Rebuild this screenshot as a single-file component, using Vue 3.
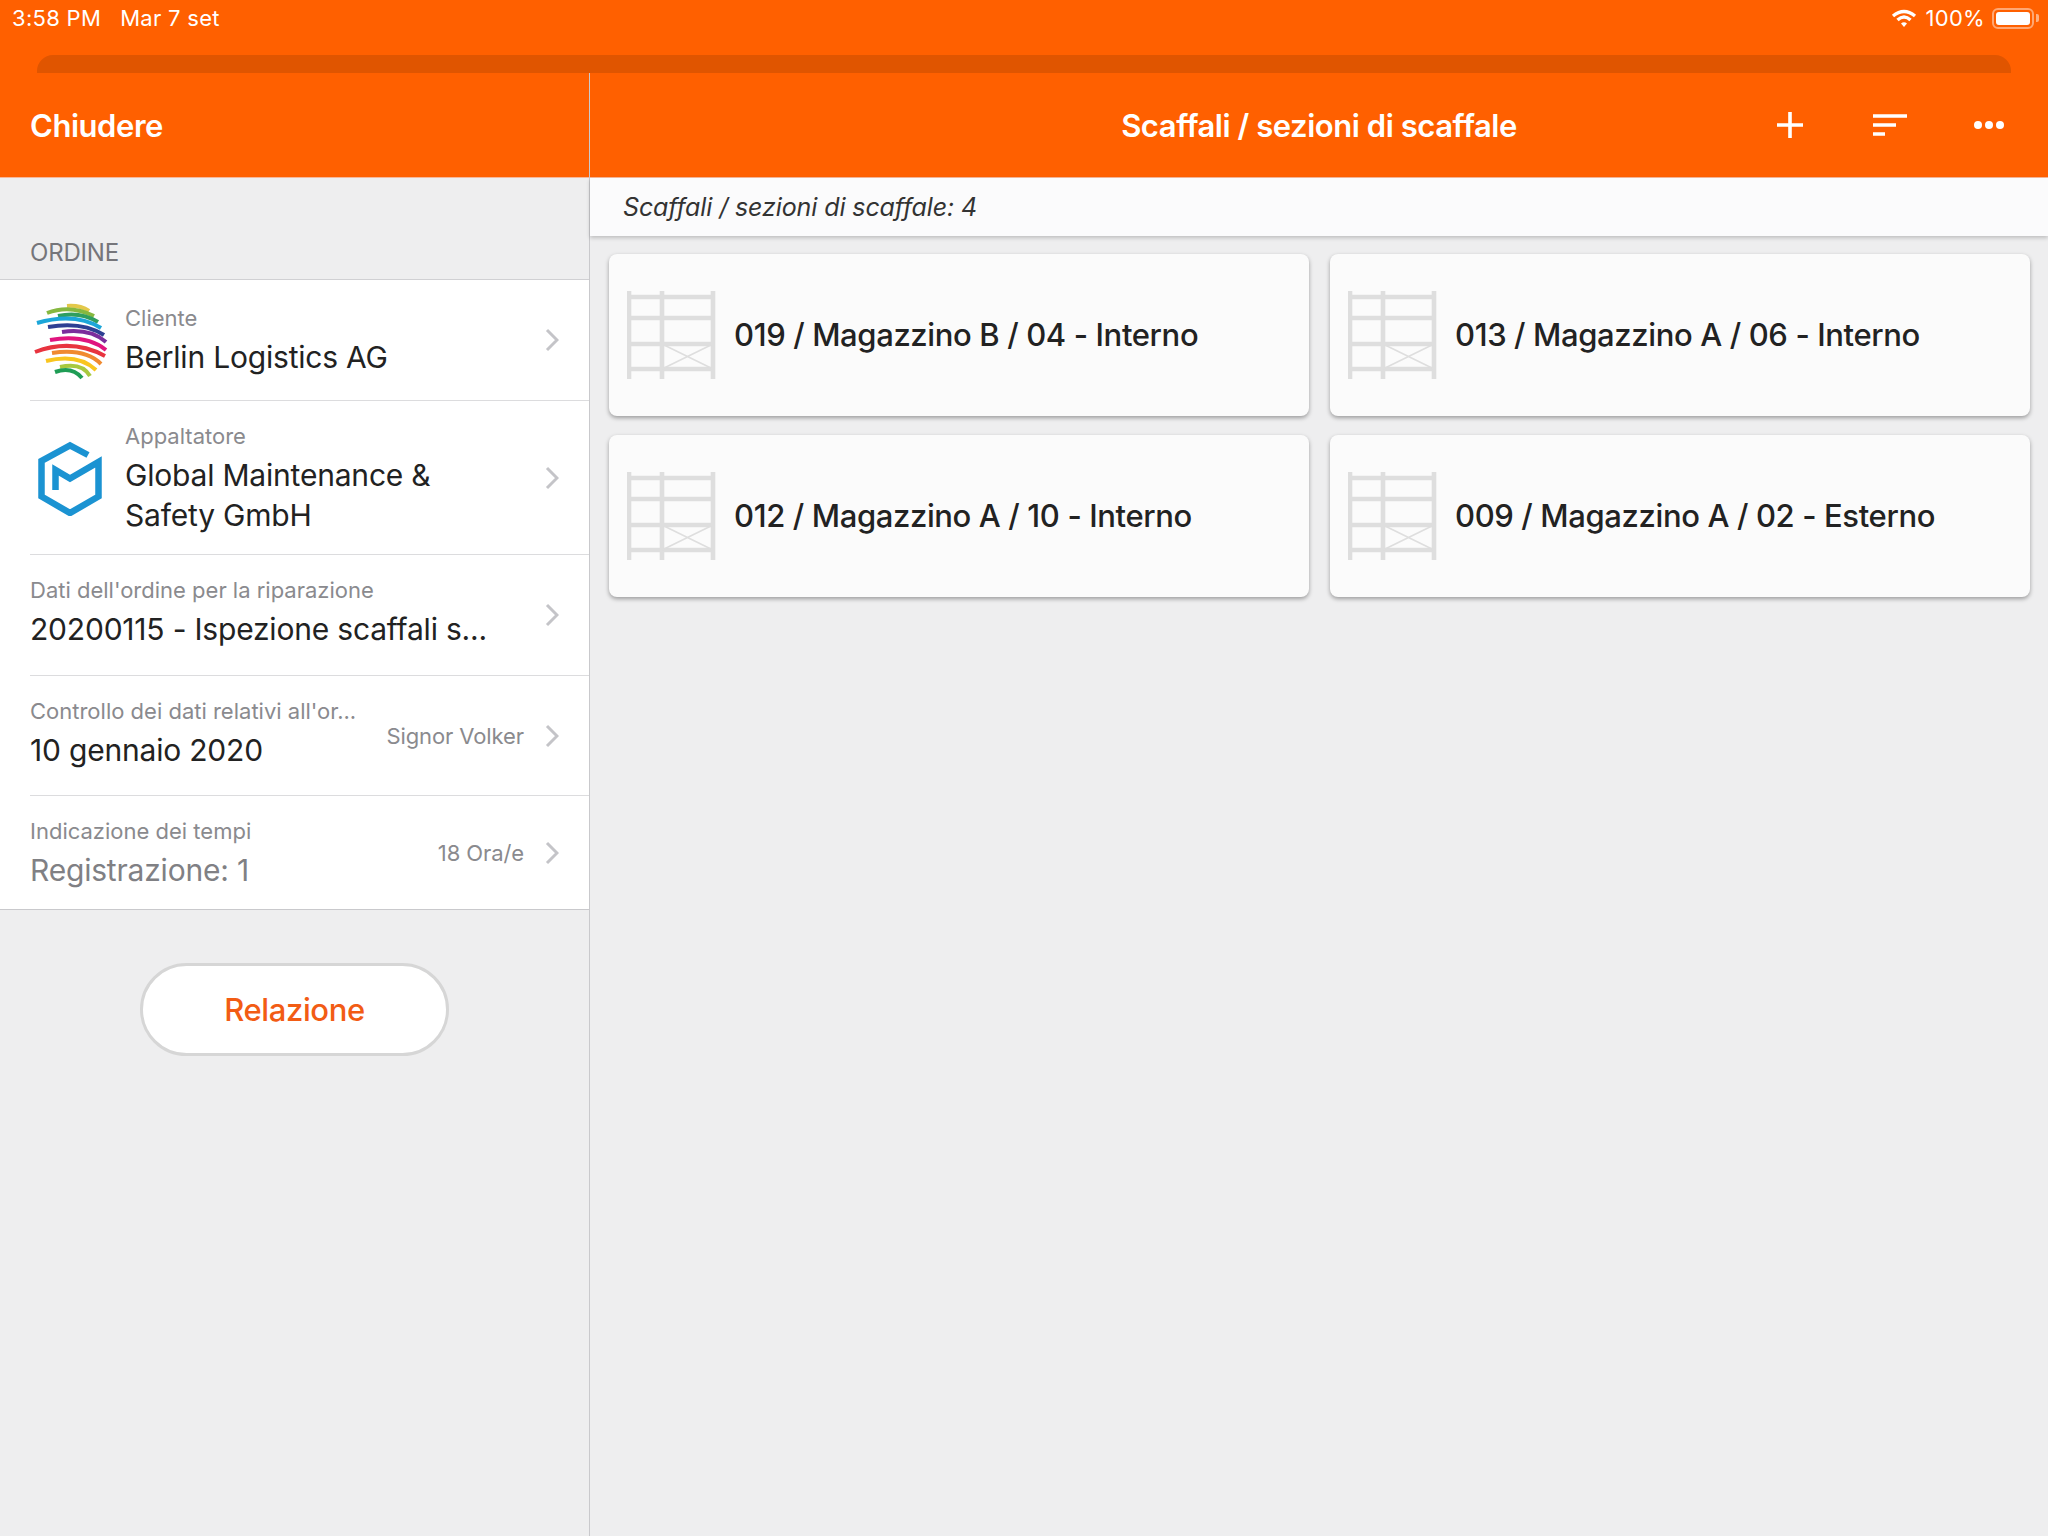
<script setup>
const rows = [
  { id: 'client', cls: 'row-client', logo: 'globe', label: 'Cliente', value: ['Berlin Logistics AG'] },
  { id: 'contractor', cls: 'row-contractor', logo: 'hex', label: 'Appaltatore', value: ['Global Maintenance &', 'Safety GmbH'] },
  { id: 'order', cls: 'row-order', label: "Dati dell'ordine per la riparazione", value: ['20200115 - Ispezione scaffali s...'] },
  { id: 'check', cls: 'row-check', label: "Controllo dei dati relativi all'or...", value: ['10 gennaio 2020'], detail: 'Signor Volker' },
  { id: 'time', cls: 'row-time', label: 'Indicazione dei tempi', value: ['Registrazione: 1'], detail: '18 Ora/e', muted: true },
]

const shelves = [
  '019 / Magazzino B / 04 - Interno',
  '013 / Magazzino A / 06 - Interno',
  '012 / Magazzino A / 10 - Interno',
  '009 / Magazzino A / 02 - Esterno',
]

const stripes = [
  ['M47 16 Q60 15 69 21', '#e3c84a'],
  ['M27 23 Q50 14 74 26', '#86b840'],
  ['M38 26 Q60 21 78 32', '#2f9e5f'],
  ['M17 33 Q55 22 81 38', '#1ca6d9'],
  ['M28 37 Q62 31 84 45', '#2e3f93'],
  ['M42 42 Q70 38 86 52', '#7b2d9c'],
  ['M30 50 Q66 44 86 60', '#e0157f'],
  ['M15 62 Q52 48 85 66', '#e8343f'],
  ['M32 63 Q65 58 81 74', '#f08a30'],
  ['M26 71 Q58 63 76 80', '#f9c51f'],
  ['M40 77 Q62 72 70 86', '#a8c93f'],
  ['M35 82 Q52 76 62 88', '#1f9d55'],
]
</script>

<template>
  <div class="app">
    <div class="status">
      <div class="status-left">
        <span>3:58 PM</span>
        <span>Mar 7 set</span>
      </div>
      <div class="status-right">
        <svg class="wifi" width="26" height="19" viewBox="0 0 26 19">
          <path d="M2 7 Q13 -2 24 7" />
          <path d="M6.5 11 Q13 5 19.5 11" />
          <path class="wifi-dot" d="M10 14.5 Q13 12 16 14.5 L13 18 Z" />
        </svg>
        <span>100%</span>
        <div class="battery"><div class="battery-fill"></div></div>
        <div class="battery-nub"></div>
      </div>
    </div>
    <div class="handle"></div>

    <div class="main">
      <aside class="sidebar">
        <div class="side-head">Chiudere</div>
        <div class="section-title">ORDINE</div>
        <ul class="list">
          <li v-for="row in rows" :key="row.id" class="row" :class="row.cls">
            <div class="row-inner">
              <svg v-if="row.logo === 'globe'" class="logo" width="80" height="80" viewBox="10 10 80 80">
                <path v-for="s in stripes" :key="s[0]" :d="s[0]" :stroke="s[1]" fill="none" stroke-width="4" />
              </svg>
              <svg v-if="row.logo === 'hex'" class="logo logo-hex" width="80" height="80" viewBox="10 10 80 80">
                <path d="M68 29 L50 19.5 L21.5 35 L21.5 70.5 L50 87 L78.5 70.5 L78.5 36 L50 52.5 L35.5 44 L35.5 64" fill="none" stroke="#1b93d2" stroke-width="6.5" />
              </svg>
              <div class="row-text">
                <div class="row-label">{{ row.label }}</div>
                <div class="row-value" :class="{ muted: row.muted }">
                  <div v-for="line in row.value" :key="line">{{ line }}</div>
                </div>
              </div>
              <span v-if="row.detail" class="row-detail">{{ row.detail }}</span>
              <svg class="chevron" width="14" height="24" viewBox="0 0 14 24">
                <path d="M2 2 L12 12 L2 22" fill="none" stroke="#c4c4c8" stroke-width="3" />
              </svg>
            </div>
          </li>
        </ul>
        <button class="report">Relazione</button>
      </aside>

      <section class="content">
        <header class="content-head">
          <div></div>
          <h1>Scaffali / sezioni di scaffale</h1>
          <div class="actions">
            <span class="action">
              <svg width="26" height="26" viewBox="0 0 26 26">
                <path d="M13 0 V26 M0 13 H26" stroke="#fff" stroke-width="3.6" />
              </svg>
            </span>
            <span class="action">
              <svg width="34" height="22" viewBox="0 0 34 22">
                <path d="M0 2 H34 M0 11 H23 M0 20 H12" stroke="#fff" stroke-width="3.6" />
              </svg>
            </span>
            <span class="action">
              <svg width="30" height="8" viewBox="0 0 30 8">
                <circle cx="4" cy="4" r="4" fill="#fff" />
                <circle cx="15" cy="4" r="4" fill="#fff" />
                <circle cx="26" cy="4" r="4" fill="#fff" />
              </svg>
            </span>
          </div>
        </header>
        <div class="count">Scaffali / sezioni di scaffale: 4</div>
        <div class="cards">
          <div v-for="s in shelves" :key="s" class="card">
            <svg class="shelf" width="90" height="88" viewBox="0 0 90 88">
              <path d="M2 0 V88 M35 0 V88 M86 0 V88 M2 6 H86 M2 27 H86 M2 53 H86 M2 78 H86" stroke="#dedede" stroke-width="4.6" fill="none" />
              <path d="M35 53 L86 78 M35 78 L86 53" stroke="#dedede" stroke-width="1.5" fill="none" />
            </svg>
            <span class="card-title">{{ s }}</span>
          </div>
        </div>
      </section>
    </div>
  </div>
</template>

<style scoped>
.app {
  width: 2048px;
  height: 1536px;
  display: flex;
  flex-direction: column;
  background: #ff6000;
  font-family: Inter, "Noto Sans", sans-serif;
  color: #222;
  overflow: hidden;
}

.status {
  height: 55px;
  flex: none;
  display: flex;
  justify-content: space-between;
  padding: 0 9px 19px 12px;
  box-sizing: border-box;
  align-items: center;
  color: #fff;
  font-size: 22px;
  letter-spacing: 0.3px;
}

.status-left {
  display: flex;
  gap: 19px;
}

.status-right {
  display: flex;
  align-items: center;
}

.wifi {
  margin-right: 8px;
}

.wifi path {
  fill: none;
  stroke: #fff;
  stroke-width: 3.4;
}

.wifi .wifi-dot {
  fill: #fff;
  stroke: none;
}

.battery {
  margin-left: 7px;
  width: 42px;
  height: 21px;
  box-sizing: border-box;
  border: 2px solid rgba(255, 255, 255, 0.45);
  border-radius: 6px;
  padding: 2px;
}

.battery-fill {
  height: 100%;
  background: #fff;
  border-radius: 3px;
}

.battery-nub {
  width: 3px;
  height: 8px;
  margin-left: 2px;
  background: rgba(255, 255, 255, 0.5);
  border-radius: 0 2px 2px 0;
}

.handle {
  flex: none;
  height: 18px;
  margin: 0 37px;
  background: #e05500;
  border-radius: 16px 16px 0 0;
}

.main {
  flex: 1;
  display: flex;
  min-height: 0;
}

.sidebar {
  width: 590px;
  flex: none;
  box-sizing: border-box;
  border-right: 1px solid #c9c9cc;
  background: #eeeeef;
  display: flex;
  flex-direction: column;
}

.side-head {
  height: 105px;
  box-sizing: border-box;
  background: #ff6000;
  border-bottom: 1px solid #f7b79a;
  padding-left: 30px;
  display: flex;
  align-items: center;
  color: #fff;
  font-size: 31px;
  font-weight: 600;
  letter-spacing: -0.45px;
}

.section-title {
  padding: 60px 0 11px 30px;
  line-height: 30px;
  font-size: 24px;
  letter-spacing: -0.2px;
  color: #75757a;
}

.list {
  list-style: none;
  margin: 0;
  padding: 0;
  background: #fff;
  border-top: 1px solid #d0d0d3;
  border-bottom: 1px solid #c9c9cc;
}

.row {
  padding-left: 30px;
}

.row-inner {
  display: flex;
  align-items: center;
  padding-right: 30px;
  border-bottom: 1px solid #dcdcde;
}

.row:last-child .row-inner {
  border-bottom: none;
}

.row-client .row-inner {
  padding-top: 20px;
  padding-bottom: 20px;
}

.row-contractor .row-inner {
  padding-top: 20px;
  padding-bottom: 19px;
}

.row-order .row-inner {
  padding-top: 20px;
  padding-bottom: 20px;
}

.row-order .row-text,
.row-check .row-text {
  margin-bottom: 6px;
}

.row-check .row-inner {
  padding-top: 20px;
  padding-bottom: 19px;
}

.row-time .row-inner {
  padding-top: 20px;
  padding-bottom: 19px;
}

.logo {
  flex: none;
  margin-right: 15px;
}

.logo-hex {
  margin-bottom: 4px;
}

.row-text {
  flex: 1;
  min-width: 0;
}

.row-label {
  font-size: 22px;
  line-height: 30px;
  color: #8a8a8e;
  white-space: nowrap;
}

.row-value {
  margin-top: 4px;
  font-size: 30px;
  line-height: 40px;
  letter-spacing: -0.2px;
  color: #222;
  white-space: nowrap;
}

.row-value.muted {
  color: #808084;
}

.row-detail {
  flex: none;
  margin-right: 21px;
  font-size: 22px;
  letter-spacing: -0.1px;
  color: #8a8a8e;
}

.chevron {
  flex: none;
}

.report {
  align-self: center;
  margin-top: 53px;
  width: 309px;
  height: 93px;
  border: 3px solid #d6d6d6;
  border-radius: 47px;
  background: #fff;
  color: #f25c14;
  font-family: inherit;
  font-size: 31px;
  font-weight: 500;
  letter-spacing: -0.4px;
}

.content {
  flex: 1;
  min-width: 0;
  display: flex;
  flex-direction: column;
  background: #eeeeef;
}

.content-head {
  height: 105px;
  flex: none;
  box-sizing: border-box;
  background: #ff6000;
  border-bottom: 1px solid #f7b79a;
  display: grid;
  grid-template-columns: 1fr auto 1fr;
  align-items: center;
  color: #fff;
}

.content-head h1 {
  margin: 0;
  font-size: 31px;
  font-weight: 600;
  letter-spacing: -0.45px;
}

.actions {
  display: flex;
  justify-content: flex-end;
  padding-right: 9px;
}

.action {
  width: 99.5px;
  display: flex;
  justify-content: center;
  align-items: center;
}

.count {
  height: 58px;
  flex: none;
  box-sizing: border-box;
  display: flex;
  align-items: center;
  padding-left: 33px;
  background: #fbfbfc;
  box-shadow: 0 2px 4px rgba(0, 0, 0, 0.2);
  font-size: 25px;
  letter-spacing: -0.1px;
  font-style: italic;
  color: #333;
  position: relative;
}

.cards {
  display: grid;
  grid-template-columns: 700px 700px;
  grid-auto-rows: 162px;
  gap: 19px 21px;
  padding: 18px 19px;
}

.card {
  display: flex;
  align-items: center;
  gap: 17px;
  padding-left: 18px;
  background: #fbfbfb;
  border-radius: 8px;
  box-shadow: 0 2px 4px rgba(0, 0, 0, 0.35);
}

.shelf {
  flex: none;
}

.card-title {
  font-size: 31px;
  font-weight: 500;
  letter-spacing: -0.37px;
  color: #222;
  white-space: nowrap;
  margin-bottom: 2px;
}
</style>
